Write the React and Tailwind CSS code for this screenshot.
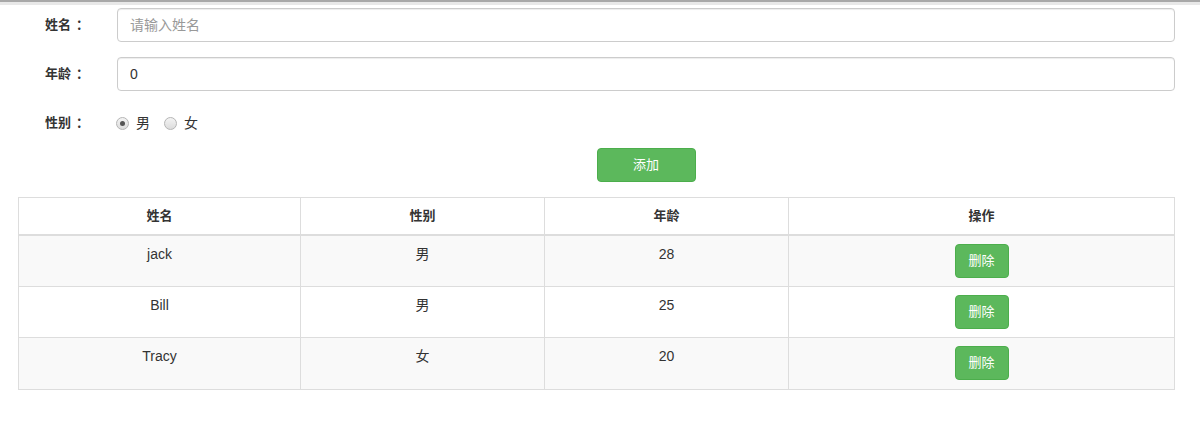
import React, { useState } from 'react';

const font = { fontFamily: '"Liberation Sans", "Noto Sans CJK SC", sans-serif' };

function Radio({ checked, label, onClick }) {
  return (
    <label className="flex items-center cursor-pointer" onClick={onClick}>
      <span className="w-[13px] h-[13px] rounded-full border border-[#b5b5b5] bg-gradient-to-b from-[#f4f4f4] to-[#dcdcdc] flex items-center justify-center">
        {checked && <span className="w-[5px] h-[5px] rounded-full bg-[#555]" />}
      </span>
      <span className="ml-[7px] text-[14px] text-[#333]">{label}</span>
    </label>
  );
}

function Label({ text, w }) {
  return (
    <label className={`${w} font-bold text-[13px] shrink-0`}>
      {text}
      <span className="ml-[5px]">：</span>
    </label>
  );
}

function App() {
  const [sex, setSex] = useState('男');
  const rows = [
    { name: 'jack', sex: '男', age: 28 },
    { name: 'Bill', sex: '男', age: 25 },
    { name: 'Tracy', sex: '女', age: 20 },
  ];

  return (
    <div className="w-[1200px] h-[425px] bg-white text-[14px] text-[#333]" style={font}>
      <div className="h-[2px] bg-[#a8a8a8]" />
      <div className="h-[3px] bg-[#e8e8e8]" />

      <div className="pl-[45px] pr-[25px] pt-[3px]">
        <div className="flex items-center h-[34px]">
          <Label text="姓名" w="w-[72px]" />
          <input
            className="flex-1 h-[34px] px-[12px] border border-[#ccc] rounded-[4px] shadow-[inset_0_1px_1px_rgba(0,0,0,0.075)] outline-none placeholder:text-[#999]"
            placeholder="请输入姓名"
          />
        </div>
        <div className="flex items-center h-[34px] mt-[15px]">
          <Label text="年龄" w="w-[72px]" />
          <input
            className="flex-1 h-[34px] px-[12px] border border-[#ccc] rounded-[4px] shadow-[inset_0_1px_1px_rgba(0,0,0,0.075)] outline-none"
            defaultValue="0"
          />
        </div>
        <div className="flex items-center h-[20px] mt-[22px]">
          <Label text="性别" w="w-[71px]" />
          <div className="flex items-center gap-[14px]">
            <Radio checked={sex === '男'} label="男" onClick={() => setSex('男')} />
            <Radio checked={sex === '女'} label="女" onClick={() => setSex('女')} />
          </div>
        </div>
      </div>

      <div className="flex justify-center mt-[15px] pl-[92px]">
        <button className="w-[99px] h-[34px] rounded-[4px] bg-[#5cb85c] border border-[#4cae4c] text-white text-[13px]">
          添加
        </button>
      </div>

      <div className="ml-[18px] mr-[25px] mt-[15px]">
        <table className="w-full border-collapse border border-[#ddd]">
          <thead>
            <tr>
              <th className="w-[282px] h-[37px] border border-[#ddd] border-b-2 font-bold text-[13px]">姓名</th>
              <th className="w-[244px] border border-[#ddd] border-b-2 font-bold text-[13px]">性别</th>
              <th className="w-[244px] border border-[#ddd] border-b-2 font-bold text-[13px]">年龄</th>
              <th className="border border-[#ddd] border-b-2 font-bold text-[13px]">操作</th>
            </tr>
          </thead>
          <tbody>
            {rows.map((r, i) => (
              <tr key={r.name} className={i % 2 === 0 ? 'bg-[#f9f9f9]' : 'bg-white'}>
                <td className="h-[51.5px] border border-[#ddd] text-center align-top pt-[8px]">{r.name}</td>
                <td className="border border-[#ddd] text-center align-top pt-[8px]">{r.sex}</td>
                <td className="border border-[#ddd] text-center align-top pt-[8px]">{r.age}</td>
                <td className="border border-[#ddd] text-center align-top pt-[8px]">
                  <button className="w-[54px] h-[34px] rounded-[4px] bg-[#5cb85c] border border-[#4cae4c] text-white text-[13px]">
                    删除
                  </button>
                </td>
              </tr>
            ))}
          </tbody>
        </table>
      </div>
    </div>
  );
}

export default App;
